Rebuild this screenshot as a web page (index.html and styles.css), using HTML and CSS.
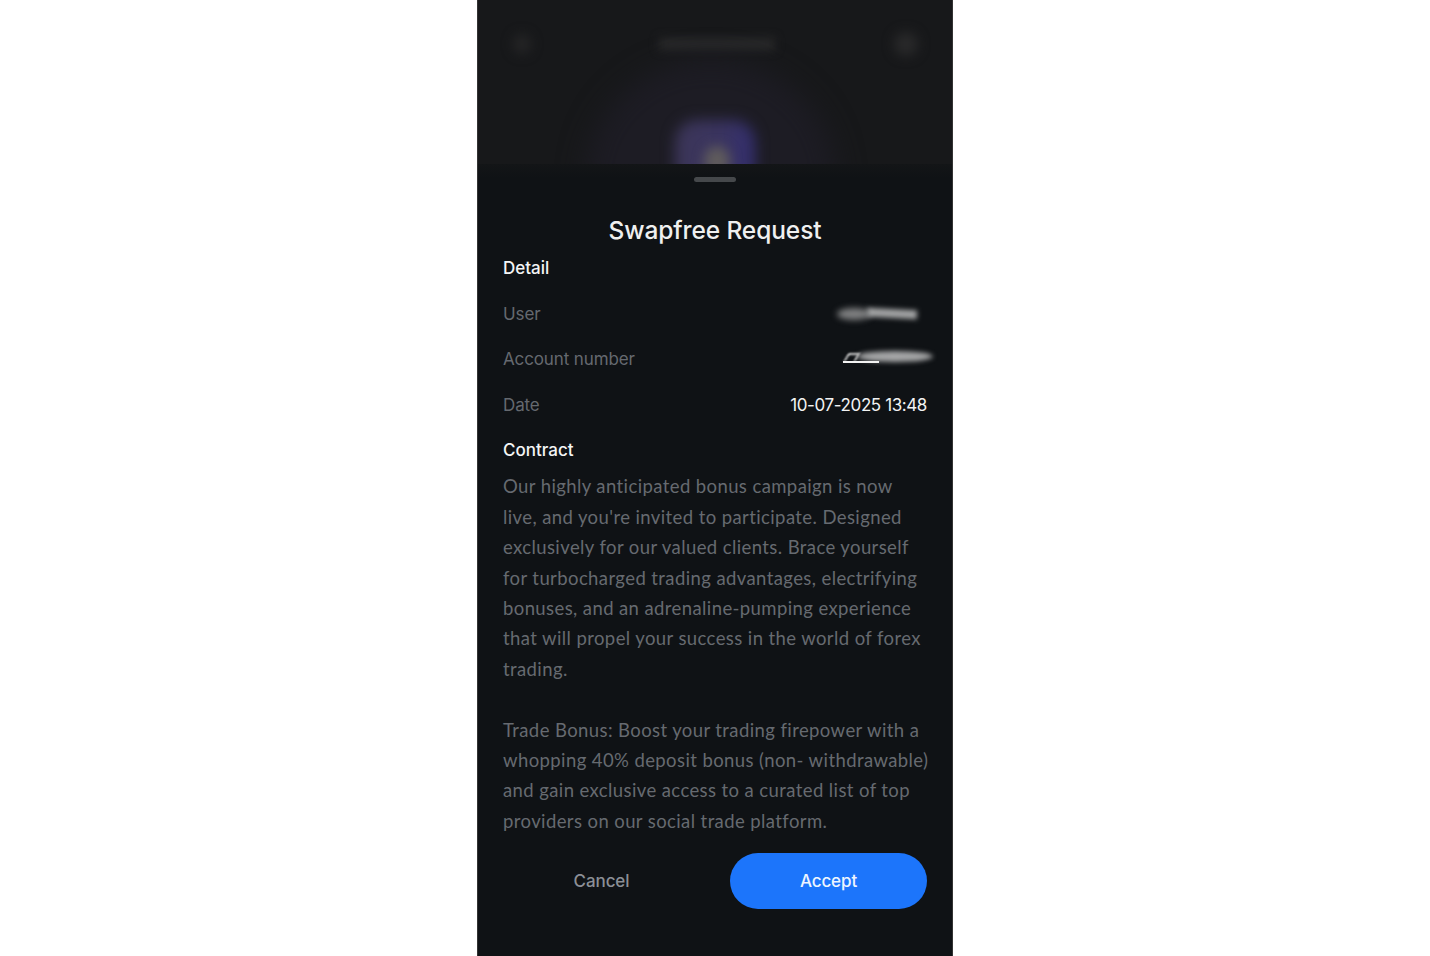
FILE: index.html
```html
<!DOCTYPE html>
<html lang="en">
<head>
<meta charset="utf-8">
<title>Swapfree Request</title>
<link rel="stylesheet" href="styles.css">
</head>
<body>
<main class="phone">
  <header class="backdrop">
    <span class="blur blur-back"></span>
    <span class="blur blur-title"></span>
    <span class="blur blur-menu"></span>
    <span class="blur blur-halo"></span>
    <span class="blur blur-logo"></span>
    <span class="blur blur-logo-core"></span>
  </header>
  <section class="sheet">
    <div class="handle"></div>
    <h1 class="title">Swapfree Request</h1>
    <h2 class="heading">Detail</h2>
    <div class="row"><span class="label">User</span>
      <span class="smear smear-user"><i class="smear-a"></i><i class="smear-b"></i></span></div>
    <div class="row"><span class="label">Account number</span>
      <span class="smear smear-account"><i class="smear-c"></i><i class="smear-d"></i><i class="smear-line"></i></span></div>
    <div class="row"><span class="label">Date</span><span class="value">10-07-2025 13:48</span></div>
    <h2 class="heading heading-contract">Contract</h2>
    <p class="contract">Our highly anticipated bonus campaign is now<br>live, and you're invited to participate. Designed<br>exclusively for our valued clients. Brace yourself<br>for turbocharged trading advantages, electrifying<br>bonuses, and an adrenaline-pumping experience<br>that will propel your success in the world of forex<br>trading.<br><br>Trade Bonus: Boost your trading firepower with a<br>whopping 40% deposit bonus (non- withdrawable)<br>and gain exclusive access to a curated list of top<br>providers on our social trade platform.</p>
    <div class="actions">
      <button class="btn btn-cancel" type="button">Cancel</button>
      <button class="btn btn-accept" type="button">Accept</button>
    </div>
  </section>
</main>
</body>
</html>
```
FILE: styles.css
```css
* { box-sizing: border-box; }
html, body { margin: 0; height: 100%; background: #fff; }
body { display: flex; justify-content: center; overflow: hidden; }
.phone {
  width: 476px; height: 956px; background: #0f1215;
  display: flex; flex-direction: column;
  font-family: Inter, "Liberation Sans", sans-serif;
  border-left: 1px solid #333; border-right: 1px solid #333;
}
.backdrop { position: relative; height: 164px; flex: none; background: #17181a; overflow: hidden; }
.blur { position: absolute; display: block; }
.blur-back { left: 35px; top: 34px; width: 18px; height: 20px; border-radius: 50%; background: #252526; filter: blur(6px); }
.blur-title { left: 181px; top: 38px; width: 116px; height: 12px; background: #29292a; filter: blur(5px); }
.blur-menu { left: 416px; top: 32px; width: 24px; height: 24px; border-radius: 50%; background: #29292a; filter: blur(6px); }
.blur-halo { left: 108px; top: 60px; width: 250px; height: 240px; border-radius: 50%; background: #1d1c24; filter: blur(14px); }
.blur-logo { left: 197px; top: 120px; width: 80px; height: 70px; border-radius: 22px; background: linear-gradient(90deg, #3c3658, #3a3460 60%, #332e70); filter: blur(7px); }
.blur-logo-core { left: 226px; top: 146px; width: 26px; height: 30px; border-radius: 50%; background: #5f5b5c; filter: blur(6px); }
.sheet { position: relative; flex: 1; padding: 13px 25px 0; background: linear-gradient(#131517, #0f1215 14px); display: flex; flex-direction: column; }
.handle { width: 42px; height: 5px; border-radius: 3px; background: #45484b; margin: 0 auto; flex: none; }
.title { margin: 33px 0 0; height: 30px; font-size: 24.5px; line-height: 30px; font-weight: 500; color: #eff0f0; text-align: center; letter-spacing: -0.1px; }
.heading { margin: 11px 0 0; font-size: 17px; line-height: 24px; font-weight: 500; color: #f4f5f5; letter-spacing: 0; }
.row { display: flex; justify-content: space-between; align-items: center; height: 24px; margin-top: 21.6px; font-size: 17px; position: relative; }
.label { color: #65696f; letter-spacing: -0.12px; }
.value { color: #f2f3f3; letter-spacing: -0.4px; }
.heading-contract { margin-top: 21.6px; }
.contract { margin: 9px 0 0; width: 430px; font-family: Lato, "Liberation Sans", sans-serif; font-size: 18.5px; line-height: 30.4px; color: #666a70; letter-spacing: 0.4px; white-space: nowrap; }
.smear { position: absolute; top: 0; height: 24px; display: block; }
.smear i { position: absolute; display: block; }
.smear-user { left: 330px; width: 90px; }
.smear-a { left: 4px; top: 6px; width: 34px; height: 12px; border-radius: 50%; background: #7f8081; filter: blur(3px); }
.smear-b { left: 34px; top: 7px; width: 50px; height: 9px; background: #a1a2a3; filter: blur(2.5px); transform: rotate(3deg); }
.smear-account { left: 340px; width: 92px; }
.smear-c { left: 14px; top: 4px; width: 76px; height: 11px; border-radius: 50%; background: #a5a6a7; filter: blur(2.5px); }
.smear-d { left: 3px; top: 6px; width: 12px; height: 8px; border: 2px solid #cfcfcf; border-bottom: 0; filter: blur(.8px); transform: skewX(-30deg); }
.smear-line { left: 0; top: 14px; width: 36px; height: 1.5px; background: #f2f2f2; }
.actions { display: flex; justify-content: space-between; align-items: center; margin-top: 17px; }
.btn { width: 197px; height: 56px; border: 0; border-radius: 28px; font: 500 17px Inter, "Liberation Sans", sans-serif; letter-spacing: -0.1px; }
.btn-cancel { background: transparent; color: #8b8f96; }
.btn-accept { background: #1c75fb; color: #eef5ff; }
```
